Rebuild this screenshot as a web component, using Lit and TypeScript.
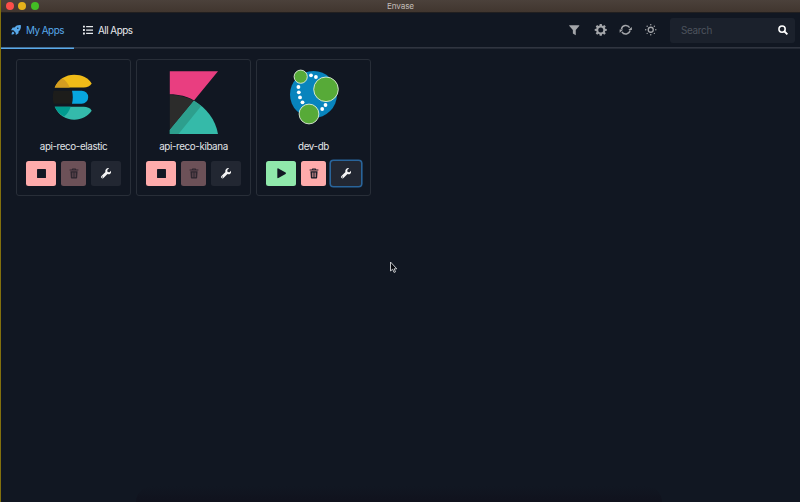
import { LitElement, html, css, svg } from "lit";
import { customElement, property } from "lit/decorators.js";

const icons: Record<string, any> = {
  rocket: svg`<path d="M15.800.2C11.300-.3 8 1 5.600 4H2.700L0 8.300l3.700.2 3.800 3.800.2 3.700L12 13.300v-2.900C15 8 16.300 4.700 15.800.2ZM10.900 6.300a1.200 1.200 0 1 1 0-2.400 1.200 1.200 0 0 1 0 2.400Z"/><path d="M3.200 10.400c-1.700.5-2.200 2.800-2.400 4.800 2 0 4.300-.7 4.800-2.400Z"/>`,
  list: svg`<path d="M0 1h3v3H0zM0 6.500h3v3H0zM0 12h3v3H0zM5 1.500h11v2H5zM5 7h11v2H5zM5 12.500h11v2H5z"/>`,
  filter: svg`<path d="M1 .5h14c.8 0 1 .7.500 1.200L10.300 7.600V15.500L5.900 13V7.600L.5 1.700C0 1.200.2.500 1 .5Z"/>`,
  gear: svg`<path fill-rule="evenodd" d="M6.600 0h2.800l.4 2.200 1.300.5 1.900-1.300 2 2-1.300 1.900.5 1.300 2.200.4v2.400l-2.200.4-.5 1.300 1.300 1.900-2 2-1.900-1.300-1.300.5-.4 2.200H6.600l-.4-2.200-1.300-.5L3 15l-2-2 1.300-1.900-.5-1.300L-.4 9.400V7l2.200-.4.5-1.300L1 3.400l2-2 1.900 1.300 1.300-.5ZM8 4.700a3.500 3.500 0 1 0 0 7 3.500 3.500 0 0 0 0-7Z"/>`,
  sync: svg`<g fill="none" stroke="currentColor" stroke-width="2"><path d="M2 7A6.200 6.200 0 0 1 13.400 5M14 9A6.200 6.200 0 0 1 2.600 11"/></g><path d="M16.500 4v4.500h-5zM-.5 12V7.500h5z"/>`,
  sun: svg`<circle cx="8" cy="8" r="3.500" fill="none" stroke="currentColor" stroke-width="1.800"/><g><circle cx="8" cy="1" r="1"/><circle cx="8" cy="15" r="1"/><circle cx="1" cy="8" r="1"/><circle cx="15" cy="8" r="1"/><circle cx="3" cy="3" r="1"/><circle cx="13" cy="3" r="1"/><circle cx="3" cy="13" r="1"/><circle cx="13" cy="13" r="1"/></g>`,
  search: svg`<g fill="none" stroke="currentColor" stroke-width="2.500"><circle cx="6.500" cy="6.500" r="5"/><path d="m10 10 5 5" stroke-width="3"/></g>`,
  stop: svg`<rect x="1.500" y="1.500" width="13" height="13" rx=".8"/>`,
  play: svg`<path d="M2 1.500C2 .5 2.800.1 3.600.6l11 6.300c.8.5.8 1.700 0 2.200l-11 6.300C2.800 15.900 2 15.500 2 14.500Z"/>`,
  trash: svg`<path fill-rule="evenodd" d="M5.300 0h5.400l.8 1.600H15v1.700H1V1.600h3.500ZM6.200 1l-.3.600h4.200L9.800 1ZM2.300 4.500h11.400L13 14.700c0 .8-.6 1.300-1.300 1.300H4.300c-.7 0-1.300-.5-1.300-1.300ZM4.700 6.300v7.500h1.100V6.300Zm2.700 0v7.500h1.200V6.300Zm2.800 0v7.500h1.100V6.300Z"/>`,
  wrench: svg`<path fill-rule="evenodd" d="M15.800 3.700 13 6.500l-3-.5-.5-3L12.300.2a4.600 4.600 0 0 0-5.500 5.900L.7 12.200a2.200 2.200 0 0 0 3.100 3.100l6.100-6.100a4.600 4.600 0 0 0 5.900-5.500ZM2.300 13a.8.800 0 1 1 0 1.600.8.800 0 0 1 0-1.600Z"/>`,
};

const icon = (name: string) =>
  html`<svg class="icon ${name}" viewBox="0 0 16 16">${icons[name]}</svg>`;

const logos: Record<string, any> = {
  elastic: svg`<g transform="translate(.7 .4)">
    <path fill="#f0bb18" d="M18 25C21.500 17 29 12.300 37.500 12.300c8 0 14 3.200 17.500 8.700-1.500 2.700-4.500 4-8 4Z"/>
    <path fill="#d49d20" d="M18 25c1.800-4 4.300-7 7.500-9.200 3.500 2 6 5.300 7.500 9.200Z"/>
    <path fill="#1d1d1b" d="M35.500 28.300H17c-1.200 4-1.200 9 0 13h18.500Z"/>
    <path fill="#07a5de" d="M35.300 28.300H45a6.500 6.500 0 0 1 0 13h-9.700c1-4.300 1-8.700 0-13Z"/>
    <path fill="#34baab" d="M18 44.300h29c3.500 0 6.500 1 8 4-4 5.500-10 9-17.500 9-8.500 0-16-5-19.500-13Z"/>
    <path fill="#019b8f" d="M18 44.300h16c-1.300 4-3.500 7.200-6.500 9.800-4-2.300-7.300-5.500-9.500-9.800Z"/></g>`,
  kibana: svg`
    <path fill="#e93e80" d="M13.800 9.200H62L38 38.500c-6.500-4-15-6.200-24.200-6.200Z"/>
    <path fill="#2c2c2b" d="M13.800 33c9 0 17 2 24.200 5.700L13.800 68Z"/>
    <path fill="#35baa9" d="M38 38.700C50.500 46 59.500 57.500 62 72H13.800v-4Z"/>
    <path fill="#2d9f8d" d="M38 38.700 45.200 44 22.500 72h-8.700v-4Z"/>`,
  neo4j: svg`
    <circle cx="37.500" cy="32.500" r="23.500" fill="#0884bd"/>
    <g fill="#fff"><circle cx="35" cy="13.300" r="1.900"/><circle cx="39.900" cy="15" r="1.900"/><circle cx="22.400" cy="25" r="1.900"/><circle cx="22.800" cy="30.300" r="1.900"/><circle cx="24" cy="35.400" r="1.900"/><circle cx="26.500" cy="40.300" r="1.900"/><circle cx="49.500" cy="43" r="1.900"/><circle cx="46.200" cy="47" r="1.900"/></g>
    <g fill="#57aa38" stroke="#e0eddb" stroke-width=".9"><circle cx="24.700" cy="14.700" r="6.600"/><circle cx="50" cy="27.300" r="12.300"/><circle cx="33" cy="52" r="9.900"/></g>`,
};

@customElement("app-card")
class AppCard extends LitElement {
  @property() name = "";
  @property() logo = "";
  @property({ type: Boolean }) running = false;

  static styles = css`
    :host { box-sizing: border-box; width: 115px; height: 137px; border: 1px solid #282e38; border-radius: 3px; display: flex; flex-direction: column; align-items: center; }
    .logo { width: 75px; height: 80px; margin: 2px 0 0 0.500px; flex: none; }
    .name { font-size: 9.800px; line-height: 14px; margin-top: -2px; color: #e3e5e8; letter-spacing: -0.380px; }
    .actions { display: flex; gap: 5px; margin-top: 7px; width: 94.500px; }
    button { all: unset; height: 25px; border-radius: 2.500px; display: flex; align-items: center; justify-content: center; flex: 0 0 30px; color: #121723; }
    .icon { width: 10.500px; height: 10.500px; fill: currentColor; display: block; }
    .stop { width: 11px; height: 11px; }
    .trash { width: 10px; height: 11px; }
    .start { background: #90e8ab; }
    .halt { background: #feabab; }
    .remove { background: #feabab; flex-basis: 24.700px; }
    .remove.disabled { background: #6c5158; color: #2b252e; }
    .config { background: #222732; color: #f5f5f6; flex-basis: 29.700px; }
    .config.focused { box-shadow: 0 0 0 1.600px #29649a; }
  `;

  render() {
    return html`
      <svg class="logo" viewBox="0 0 75 80">${logos[this.logo]}</svg>
      <div class="name">${this.name}</div>
      <div class="actions">
        <button class=${this.running ? "halt" : "start"}>${icon(this.running ? "stop" : "play")}</button>
        <button class="remove ${this.running ? "disabled" : ""}">${icon("trash")}</button>
        <button class="config ${this.running ? "" : "focused"}">${icon("wrench")}</button>
      </div>`;
  }
}

@customElement("app-root")
class AppRoot extends LitElement {
  static styles = css`
    :host { display: block; position: relative; box-sizing: border-box; width: 800px; height: 502px; overflow: hidden; background: #111722; border-left: 1px solid #82700d; font-family: Inter, "Liberation Sans", sans-serif; color: #e8eaed; }
    .titlebar { height: 12px; border-bottom: 1px solid #211f20; background: linear-gradient(#4b413b, #41362f); display: grid; grid-template-columns: 1fr auto 1fr; align-items: center; font-size: 8.200px; letter-spacing: -0.150px; color: #c2bcb8; }
    .lights { display: flex; gap: 4.500px; padding-left: 4.500px; }
    .light { width: 8px; height: 8px; border-radius: 50%; }
    .red { background: #fc4e49; }
    .yellow { background: #e5b11b; }
    .green { background: #43bd24; }
    .nav { height: 36px; box-sizing: border-box; padding-bottom: 2px; background: linear-gradient(#303540, #303540) bottom / 100% 1.600px no-repeat; display: flex; align-items: stretch; font-size: 9.900px; letter-spacing: -0.500px; }
    .tab { display: flex; align-items: center; box-sizing: border-box; width: 72.500px; padding-left: 10px; gap: 5px; }
    .tab.active { color: #58a9ea; box-shadow: inset 0 -1.600px #58a9ea; margin-bottom: -2px; padding-bottom: 2px; }
    .tab.all { width: 80px; padding-left: 9.500px; }
    .icon { width: 10px; height: 10px; fill: currentColor; overflow: visible; flex: none; }
    .tools { display: flex; align-items: center; gap: 13.600px; margin-left: auto; margin-right: 13.500px; color: #a4a6aa; }
    .tools .gear, .tools .sync, .tools .sun { width: 11.500px; height: 11.500px; }
    .tools .gear { margin-left: 1.500px; }
    .tools .filter { width: 10.500px; height: 10.500px; }
    .search-box { align-self: center; box-sizing: border-box; width: 125px; height: 25px; border-radius: 3px; background: #1b212c; display: flex; align-items: center; justify-content: space-between; padding: 0 7.500px 0 11px; margin-right: 5px; letter-spacing: -0.300px; color: #4d535d; }
    .search-box .icon { color: #fff; }
    .cards { display: flex; gap: 5px; padding: 10px 0 0 15px; }
    .shade { position: absolute; left: 135px; bottom: 0; width: 526px; height: 16px; border-radius: 16px 16px 0 0; background: linear-gradient(#11141f00, #10121d); }
    .cursor { position: absolute; left: 388px; top: 261px; width: 9px; height: 13px; }
  `;

  render() {
    return html`
      <div class="titlebar">
        <div class="lights"><span class="light red"></span><span class="light yellow"></span><span class="light green"></span></div>
        <span>Envase</span>
      </div>
      <div class="nav">
        <div class="tab active">${icon("rocket")}<span>My Apps</span></div>
        <div class="tab all">${icon("list")}<span>All Apps</span></div>
        <div class="tools">${icon("filter")}${icon("gear")}${icon("sync")}${icon("sun")}</div>
        <div class="search-box"><span>Search</span>${icon("search")}</div>
      </div>
      <div class="cards">
        <app-card name="api-reco-elastic" logo="elastic" running></app-card>
        <app-card name="api-reco-kibana" logo="kibana" running></app-card>
        <app-card name="dev-db" logo="neo4j"></app-card>
      </div>
      <div class="shade"></div>
      <svg class="cursor" viewBox="0 0 9 13"><path d="M1.500 1v9l2.200-1.800L5 11.400l1.500-.6-1.300-3h2.600Z" fill="#05070c" stroke="#d5d7da" stroke-width=".9"/></svg>`;
  }
}
